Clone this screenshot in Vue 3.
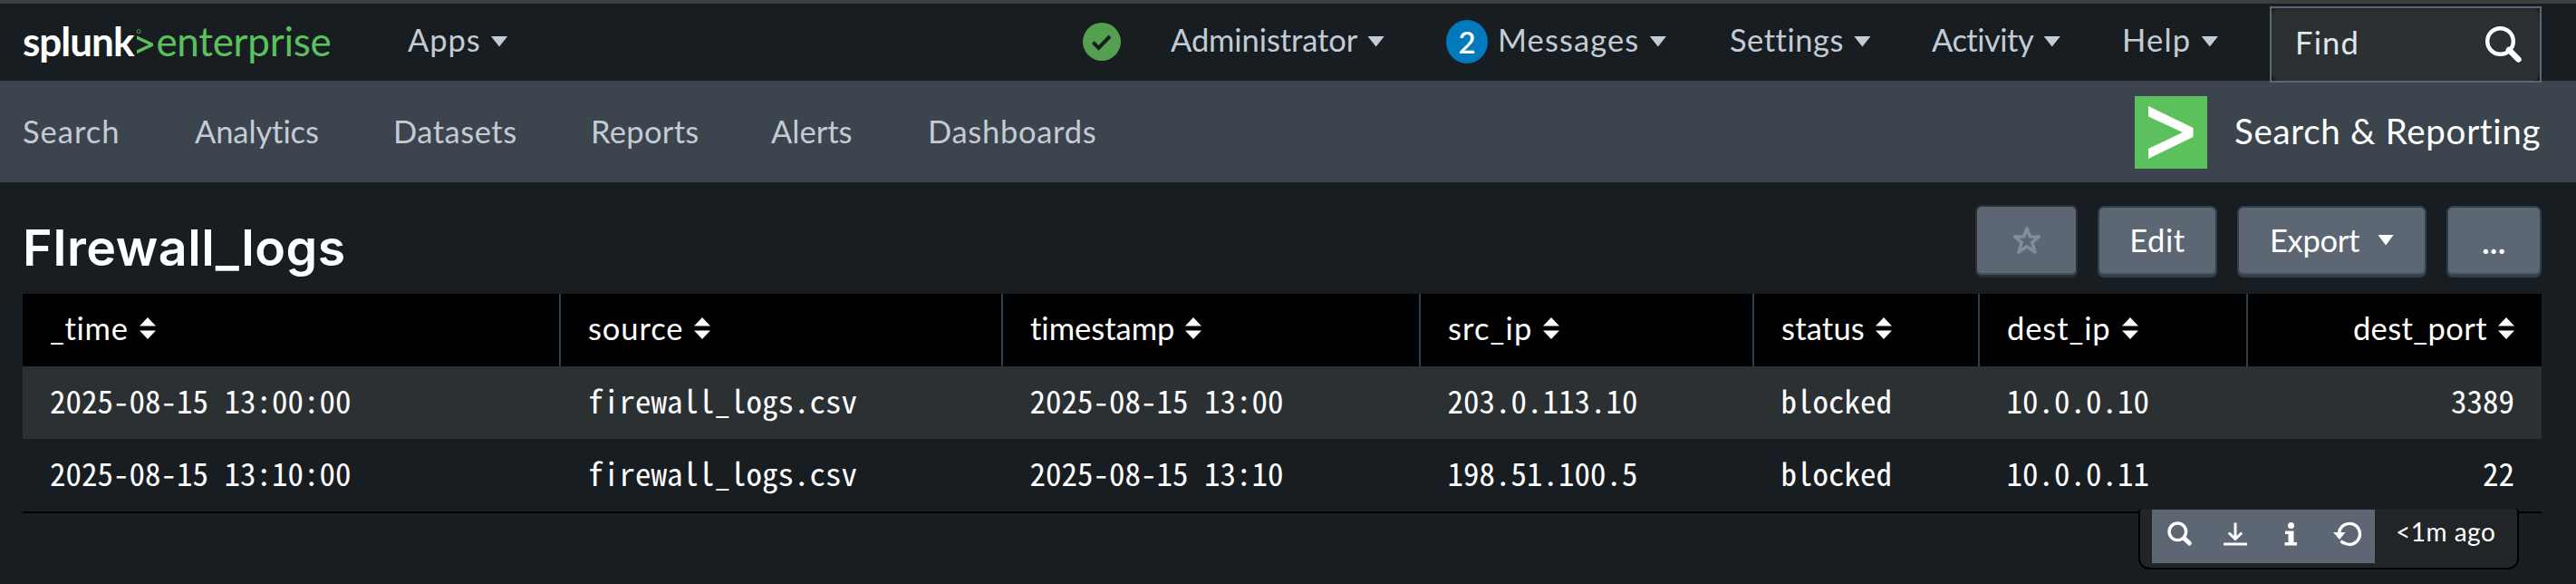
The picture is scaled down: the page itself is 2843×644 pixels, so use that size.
<script setup>
const spacing = (item) => ({ letterSpacing: item.track + 'px' })

const apps = { label: 'Apps', track: 0.9 }
const admin = { label: 'Administrator', track: -0.1 }
const messages = { label: 'Messages', track: 1.1 }
const menus = [
  { label: 'Settings', track: 0.5 },
  { label: 'Activity', track: -0.5 },
  { label: 'Help', track: 1.2 },
]
const tabs = [
  { label: 'Search', track: 1 },
  { label: 'Analytics', track: -0.1 },
  { label: 'Datasets', track: 0.5 },
  { label: 'Reports', track: 0.3 },
  { label: 'Alerts', track: 0 },
  { label: 'Dashboards', track: 0.7 },
]
const columns = [
  { label: '_time', track: 0.7 },
  { label: 'source', track: 0.9 },
  { label: 'timestamp', track: 0 },
  { label: 'src_ip', track: 1.1 },
  { label: 'status', track: 0.2 },
  { label: 'dest_ip', track: 0.9 },
  { label: 'dest_port', track: 0.4 },
]
const rows = [
  ['2025-08-15 13:00:00', 'firewall_logs.csv', '2025-08-15 13:00', '203.0.113.10', 'blocked', '10.0.0.10', '3389'],
  ['2025-08-15 13:10:00', 'firewall_logs.csv', '2025-08-15 13:10', '198.51.100.5', 'blocked', '10.0.0.11', '22'],
]
</script>

<template>
  <div class="page">
    <header class="topbar">
      <div class="logo">
        <span class="logo-name">splunk</span>
        <svg class="logo-mark" viewBox="0 0 20 30" width="20" height="30">
          <path d="M1 7.5v3.8L14.2 17.3 1 23.3v3.9l18-8.4v-3z" fill="#5cc05c" />
          <circle cx="3.2" cy="2.6" r="2" fill="none" stroke="#5cc05c" stroke-width=".8" />
        </svg>
        <span class="logo-product">enterprise</span>
      </div>
      <div class="menu"><span :style="spacing(apps)">{{ apps.label }}</span><i class="caret"></i></div>
      <svg class="health" viewBox="0 0 42 42" width="42" height="42">
        <circle cx="21" cy="21" r="21" fill="#53a051" />
        <path d="M11.3 21.6l6.2 6.2L30 15" fill="none" stroke="#171d21" stroke-width="4" />
      </svg>
      <div class="menu"><span :style="spacing(admin)">{{ admin.label }}</span><i class="caret"></i></div>
      <div class="menu"><b class="badge">2</b><span :style="spacing(messages)">{{ messages.label }}</span><i class="caret"></i></div>
      <div v-for="m in menus" :key="m.label" class="menu"><span :style="spacing(m)">{{ m.label }}</span><i class="caret"></i></div>
      <div class="find">
        <div class="find-field">
          <span>Find</span>
          <svg viewBox="0 0 40 40" width="40" height="40">
            <circle cx="16.5" cy="16.5" r="14.3" fill="none" stroke="#fff" stroke-width="4.4" />
            <path d="M26 26l10.5 10.5" stroke="#fff" stroke-width="6.5" stroke-linecap="round" />
          </svg>
        </div>
      </div>
    </header>

    <nav class="appbar">
      <a v-for="t in tabs" :key="t.label" :style="spacing(t)">{{ t.label }}</a>
      <div class="app">
        <svg viewBox="0 0 80 80" width="80" height="80">
          <rect width="80" height="80" fill="#5cc05c" />
          <path d="M15 11v11.5L53 40 15 58v11l49.500-24V35z" fill="#fff" />
        </svg>
        <span>Search &amp; Reporting</span>
      </div>
    </nav>

    <section class="heading">
      <h1>FIrewall_logs</h1>
      <div class="actions">
        <button class="btn star">
          <svg viewBox="0 0 32 32" width="32" height="32">
            <path d="M16 3l3.500 9h9.700l-7.500 6.300 3.300 10.700-9-6.200-9 6.200 3.300-10.700L2.800 12h9.700z" fill="none" stroke="#818d99" stroke-width="3.600" stroke-linejoin="round" />
          </svg>
        </button>
        <button class="btn edit">Edit</button>
        <button class="btn export">Export<i class="caret"></i></button>
        <button class="btn more">...</button>
      </div>
    </section>

    <div class="table">
      <div class="row head">
        <div v-for="c in columns" :key="c.label" class="cell">
          <span :style="spacing(c)">{{ c.label }}</span>
          <svg viewBox="0 0 18 24" width="18" height="24"><path d="M9 0l9 9.500H0zM9 24l9-9.500H0z" fill="#fff" /></svg>
        </div>
      </div>
      <div v-for="(r, i) in rows" :key="i" class="row data">
        <div v-for="(v, j) in r" :key="j" class="cell">{{ v }}</div>
      </div>
      <div class="panel-tools">
        <div class="tools">
          <svg viewBox="0 0 28 28" width="28" height="28">
            <circle cx="11.300" cy="11.300" r="9.300" fill="none" stroke="#fff" stroke-width="3.400" />
            <path d="M18.500 18.500l5.800 5.500" stroke="#fff" stroke-width="5" stroke-linecap="round" />
          </svg>
          <svg viewBox="0 0 28 28" width="28" height="28">
            <path d="M14 1.500V19M6.800 12.500l7.200 7 7.200-7M1 25h26" fill="none" stroke="#fff" stroke-width="3" />
          </svg>
          <svg viewBox="0 0 28 28" width="28" height="28">
            <circle cx="14.500" cy="4.500" r="3.500" fill="#fff" />
            <path d="M8 10.500h9.500v12.500h3.500v3.500H7.500V23h4v-9H8z" fill="#fff" />
          </svg>
          <svg viewBox="0 0 32 28" width="32" height="28">
            <path d="M6.500 13.500A11.500 11.500 0 1 1 11 23" fill="none" stroke="#fff" stroke-width="3.400" />
            <path d="M0 12h13.500L7 20z" fill="#fff" />
            <path d="M8.500 21.500l3.500 2.800" stroke="#fff" stroke-width="3.400" />
          </svg>
        </div>
        <span class="age">&lt;1m ago</span>
      </div>
    </div>
  </div>
</template>

<style>
body {
  margin: 0;
  background: #171d21;
}
</style>

<style scoped>
.page {
  box-sizing: border-box;
  height: 644px;
  overflow: hidden;
  border-top: 4px solid #3f3f3f;
  background: #171d21;
  color: #c3cbd4;
  font-family: Lato, "Liberation Sans", sans-serif;
  font-size: 34.5px;
  font-variant-ligatures: none;
}
.topbar {
  display: grid;
  grid-template-columns: 425px 745px 97px 304px 313px 223px 210px 163px 300px;
  align-items: center;
  height: 85px;
  padding-left: 25px;
}
.logo {
  display: flex;
  align-items: center;
  height: 80px;
  padding-bottom: 5px;
  box-sizing: border-box;
  font-size: 44px;
  line-height: 52px;
}
.logo-name {
  color: #fff;
  font-weight: 700;
  letter-spacing: -1px;
}
.logo-mark {
  margin: 3px 2px 0 3px;
}
.logo-product {
  color: #5cc05c;
  letter-spacing: -0.3px;
}
.menu {
  display: flex;
  align-items: center;
  padding-bottom: 8px;
  white-space: nowrap;
}
.caret {
  width: 19px;
  height: 12px;
  margin: 4px 0 0 11px;
  background: currentColor;
  clip-path: polygon(0 0, 100% 0, 50% 100%);
}
.health {
  margin-bottom: 3px;
}
.badge {
  width: 46px;
  height: 48px;
  margin: 4px 11px 0 0;
  border-radius: 50%;
  background: #007abd;
  color: #fff;
  font-size: 33px;
  font-weight: 600;
  line-height: 48px;
  text-align: center;
}
.find {
  align-self: start;
  box-sizing: border-box;
  height: 84px;
  margin-top: 3px;
  border: 2px solid #5c6773;
  background: #171d21;
  position: relative;
}
.find-field {
  display: flex;
  align-items: center;
  justify-content: space-between;
  box-sizing: border-box;
  height: 80px;
  padding: 0 20px 0 26px;
  border-radius: 8px;
  background: #2b3033;
  box-shadow: inset 0 2px 3px #25292c;
  color: #e1e6eb;
  letter-spacing: 1.2px;
}
.find-field span {
  padding-bottom: 6px;
}
.appbar {
  display: grid;
  grid-template-columns: 190px 219px 218px 199px 173px 1332px 449px;
  align-items: center;
  height: 112px;
  padding-left: 25px;
  background: #3c444d;
}
.appbar a {
  padding-bottom: 2px;
}
.app {
  display: flex;
  align-items: center;
  gap: 30px;
  padding-top: 2px;
  color: #fff;
  font-size: 38.5px;
  letter-spacing: 0.7px;
  white-space: nowrap;
}
.app span {
  margin-top: -5px;
}
.heading {
  display: flex;
  justify-content: space-between;
  box-sizing: border-box;
  height: 123px;
  padding: 25px 38px 0 25px;
}
h1 {
  margin: 13px 0 0;
  color: #fff;
  font-family: Inter, Lato, sans-serif;
  font-size: 55.5px;
  font-weight: 600;
  line-height: 68px;
  letter-spacing: 0.5px;
}
.actions {
  display: flex;
  gap: 22px;
}
.btn {
  display: flex;
  align-items: center;
  justify-content: center;
  box-sizing: border-box;
  height: 79px;
  margin-top: 1px;
  padding: 0 0 4px;
  border: 2px solid #2f3f4b;
  border-bottom-width: 3px;
  border-radius: 7px;
  background: #5c6773;
  box-shadow: inset 0 -2px #43505c;
  color: #fff;
  font-family: inherit;
  font-size: 34.5px;
  letter-spacing: 0.6px;
}
.star {
  width: 113px;
  height: 80px;
  margin-top: 0;
  border-color: #2b3033;
  padding-bottom: 2px;
}
.edit {
  width: 132px;
}
.export {
  width: 209px;
  letter-spacing: -0.3px;
}
.export .caret {
  width: 18px;
  margin: 1px 0 0 20px;
}
.more {
  width: 105px;
  padding: 0;
  font-weight: 700;
}
.table {
  position: relative;
  width: 2780px;
  margin-left: 25px;
  border-bottom: 2px solid #000;
}
.row {
  display: grid;
  grid-template-columns: 592px 488px 461px 368px 249px 296px 326px;
  height: 80px;
  color: #fff;
}
.cell {
  display: flex;
  align-items: center;
  box-sizing: border-box;
  padding: 0 30px;
}
.cell:last-child {
  justify-content: flex-end;
}
.head {
  background: #000;
}
.head .cell {
  gap: 12px;
  padding-bottom: 6px;
}
.head svg {
  margin-top: 2px;
}
.head .cell + .cell {
  padding-left: 30px;
  border-left: 2px solid #2f3f4b;
}
.data {
  font-family: "Noto Sans Mono CJK SC", "Liberation Mono", monospace;
  font-size: 35px;
}
.data .cell {
  padding-bottom: 8px;
}
.data .cell + .cell {
  padding-left: 31.5px;
}
.data:nth-child(2) {
  background: #2b3033;
}
.panel-tools {
  position: absolute;
  top: 237px;
  right: 25px;
  display: flex;
  box-sizing: border-box;
  width: 420px;
  height: 67px;
  border: 2px solid #000;
  border-top: 0;
  border-radius: 4px 4px 12px 12px;
  background: #212527;
}
.tools {
  display: flex;
  align-items: flex-start;
  justify-content: space-between;
  box-sizing: border-box;
  width: 246px;
  height: 59px;
  margin: 1px 0 0 13px;
  padding: 13px 14px 0 17px;
  background: #5c6773;
}
.age {
  margin: 8px 0 0 23px;
  color: #fff;
  font-size: 28px;
  line-height: 34px;
  letter-spacing: 0.5px;
}
</style>
